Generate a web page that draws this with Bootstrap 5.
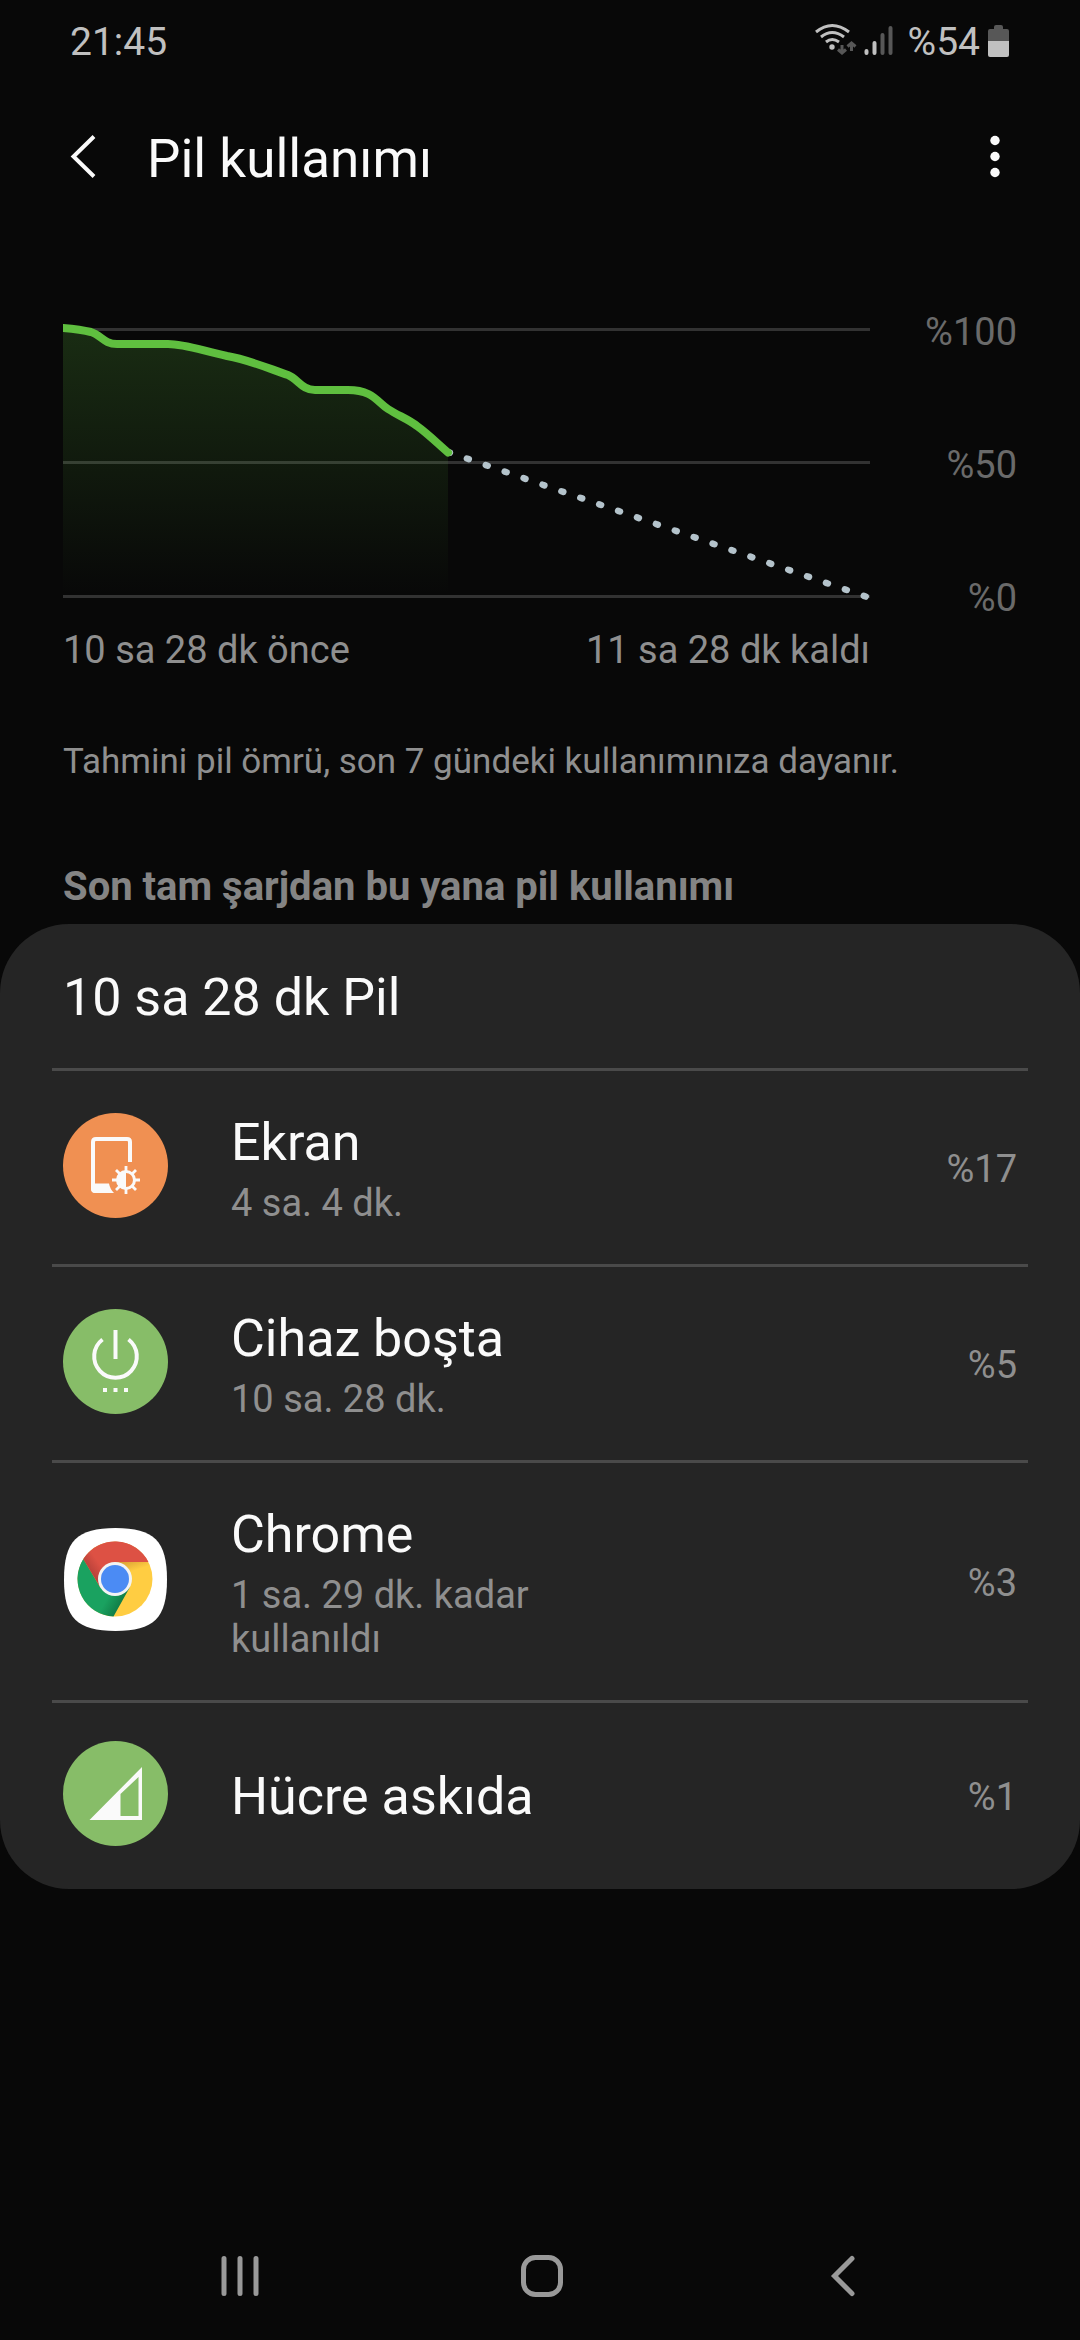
<!DOCTYPE html>
<html lang="tr">
<head>
<meta charset="utf-8">
<meta name="viewport" content="width=device-width, initial-scale=1">
<title>Pil kullanımı</title>
<link href="https://cdn.jsdelivr.net/npm/bootstrap@5.3.0/dist/css/bootstrap.min.css" rel="stylesheet">
<style>
  body { background: #080808; color: #fafafa; font-family: Roboto, "Noto Sans", sans-serif; font-size: 38px; line-height: 44px; }
  svg { display: block; flex-shrink: 0; }
  .status-bar { height: 84px; padding: 0 71px 0 70px; font-size: 39px; color: #c0c0c0; }
  .app-bar { height: 150px; padding: 0 63px 0 61px; }
  .app-bar h1 { font-size: 53px; line-height: 64px; font-weight: 400; margin: 0 0 0 38px; }
  .plain-btn { background: none; border: 0; padding: 0; color: inherit; }
  .side-pad { padding-left: 63px; padding-right: 63px; }
  .chart-block { margin-top: 76px; }
  .chart-plot { height: 310px; min-width: 0; }
  .axis { width: 147px; color: #6a6a6a; }
  .captions { margin: 8px 147px 0 0; }
  .dim { color: #8f8f8f; }
  .note { margin: 69px 0 0; font-size: 35px; line-height: 42px; }
  .section-title { margin: 82px 0 15px; font-size: 40px; line-height: 44px; font-weight: 700; color: #848484; }
  .panel { background: #252525; border-radius: 69px; }
  .panel h3 { font-size: 52px; line-height: 61px; font-weight: 400; margin: 0; padding: 43px 63px 40px; }
  .usage { --bs-list-group-bg: transparent; --bs-list-group-color: #fafafa; --bs-list-group-border-color: #4a4a4a; --bs-list-group-border-width: 0; margin: 0 52px; border-radius: 0; }
  .usage .list-group-item { padding: 41px 11px 39px; border-top: 3px solid #4a4a4a; }
  .usage .one-line { padding: 63px 11px 62px; }
  .usage svg { margin: -31px 63px -25px 0; }
  .usage .app-title { font-size: 52px; line-height: 61px; }
  .usage .app-time { margin-top: 8px; max-width: 340px; }
  .nav-keys { height: 128px; padding: 0 85px 0 89px; color: #999; }
</style>
<script src="https://cdn.jsdelivr.net/npm/bootstrap@5.3.0/dist/js/bootstrap.bundle.min.js"></script>
</head>
<body>
<div class="d-flex flex-column min-vh-100">
  <div class="status-bar d-flex align-items-center justify-content-between">
    <span>21:45</span>
    <div class="d-flex align-items-center">
      <svg width="82" height="44" viewBox="0 0 82 44" fill="none" aria-hidden="true">
        <g stroke="#c0c0c0" stroke-width="3">
          <path d="M2 12Q18 -1 35 12"/>
          <path d="M7 17Q18 8 30 17"/>
          <path d="M12 22Q18 17 25 22"/>
        </g>
        <circle cx="18" cy="27" r="2.7" fill="#c0c0c0"/>
        <path d="M28 25v7M24 29.500l4 3.500l4-3.500M37.500 31v-7M33.500 26.500l4-3.500l4 3.500" stroke="#575757" stroke-width="3"/>
        <g stroke-width="4" stroke-linecap="round"><path d="M52.500 31v2M60.500 23v10" stroke="#c0c0c0"/><path d="M68.500 15v18M76.500 8v25" stroke="#575757"/></g>
      </svg>
      <span class="ms-2 ps-1">%54</span>
      <svg class="ms-2" width="21" height="36" viewBox="0 0 21 36" aria-hidden="true">
        <path d="M6 5V3q0-2 2-2h5q2 0 2 2v2h4q2 0 2 2v11H0V7q0-2 2-2z" fill="#575757"/>
        <path d="M0 17h21v14q0 2-2 2H2q-2 0-2-2z" fill="#c0c0c0"/>
      </svg>
    </div>
  </div>

  <header class="app-bar d-flex align-items-center">
    <button class="plain-btn" type="button" aria-label="Geri">
      <svg width="48" height="48" viewBox="0 0 48 48" fill="none"><path d="M33 1.500L12.500 21.500L33 41.500" stroke="#fafafa" stroke-width="4"/></svg>
    </button>
    <h1>Pil kullanımı</h1>
    <button class="plain-btn ms-auto" type="button" aria-label="Diğer seçenekler">
      <svg width="44" height="48" viewBox="0 0 44 48" fill="#fafafa"><circle cx="22" cy="5.500" r="4.700"/><circle cx="22" cy="21.500" r="4.700"/><circle cx="22" cy="37.500" r="4.700"/></svg>
    </button>
  </header>

  <main class="flex-grow-1">
    <section class="side-pad">
      <div class="chart-block d-flex">
        <svg class="chart-plot flex-grow-1 flex-shrink-1" viewBox="0 0 807 310" preserveAspectRatio="none" fill="none" role="img" aria-label="Pil seviyesi grafiği">
          <defs>
            <linearGradient id="fade" x1="0" y1="18" x2="0" y2="285" gradientUnits="userSpaceOnUse">
              <stop offset="0" stop-color="#5fbf3f" stop-opacity=".2"/><stop offset="1" stop-color="#5fbf3f" stop-opacity="0"/>
            </linearGradient>
          </defs>
          <path d="M0 19.500H807M0 152.500H807M0 286.500H807" stroke="#323232" stroke-width="3"/>
          <path d="M0 18C12 19 20 20 28 22C38 25 41 34 54 34H105C122 34 140 41 164 46C187 50 207 59 225 65C235 69 239 80 252 80H285C310 80 314 92 325 99C336 106 345 109 354 116C364 123 374 133 385 142.500V285H0Z" fill="url(#fade)"/>
          <path d="M385 142L804 287" stroke="#b4c3cb" stroke-width="6.500" stroke-linecap="round" stroke-dasharray="2 18"/>
          <path d="M-4 18L0 18C12 19 20 20 28 22C38 25 41 34 54 34H105C122 34 140 41 164 46C187 50 207 59 225 65C235 69 239 80 252 80H285C310 80 314 92 325 99C336 106 345 109 354 116C364 123 374 133 385 142.500" stroke="#5fbf3f" stroke-width="8" stroke-linecap="round"/>
        </svg>
        <div class="axis d-flex flex-column justify-content-between text-end">
          <span>%100</span><span>%50</span><span>%0</span>
        </div>
      </div>
      <div class="captions dim d-flex justify-content-between"><span>10 sa 28 dk önce</span><span>11 sa 28 dk kaldı</span></div>
      <p class="note dim">Tahmini pil ömrü, son 7 gündeki kullanımınıza dayanır.</p>
      <h2 class="section-title">Son tam şarjdan bu yana pil kullanımı</h2>
    </section>

    <section class="panel">
      <h3>10 sa 28 dk Pil</h3>
      <div class="list-group usage">
        <a href="#" class="list-group-item d-flex align-items-center">
          <svg width="105" height="105" viewBox="0 0 105 105" fill="none" aria-hidden="true">
            <circle cx="52.500" cy="52.500" r="52.500" fill="#f09052"/>
            <path d="M67 49V29q0-3-3-3H33q-3 0-3 3V75q0 3 3 3h12" stroke="#fafafa" stroke-width="4"/>
            <path d="M28 70.500H46Q47 76 51 80H32q-4 0-4-4z" fill="#fafafa"/>
            <path d="M63 53v28M49 67h28M53 57l20 20M73 57l-20 20" stroke="#fafafa" stroke-width="2.800"/>
            <circle cx="63" cy="67" r="8.500" fill="#f09052" stroke="#fafafa" stroke-width="3"/>
            <path d="M63 58a9 9 0 0 0 0 18z" fill="#fafafa"/>
          </svg>
          <div><div class="app-title">Ekran</div><div class="app-time dim">4 sa. 4 dk.</div></div>
          <span class="ms-auto dim">%17</span>
        </a>
        <a href="#" class="list-group-item d-flex align-items-center">
          <svg width="105" height="105" viewBox="0 0 105 105" fill="none" aria-hidden="true">
            <circle cx="52.500" cy="52.500" r="52.500" fill="#87bd68"/>
            <path d="M39.500 30.500A21.300 21.300 0 1 0 65.500 30.500M52.500 21V50" stroke="#fafafa" stroke-width="4"/>
            <path d="M40 79h4v4h-4zM50.500 79h4v4h-4zM61 79h4v4h-4z" fill="#fafafa"/>
          </svg>
          <div><div class="app-title">Cihaz boşta</div><div class="app-time dim">10 sa. 28 dk.</div></div>
          <span class="ms-auto dim">%5</span>
        </a>
        <a href="#" class="list-group-item d-flex align-items-center">
          <svg width="105" height="105" viewBox="0 0 105 105" aria-hidden="true">
            <defs>
              <linearGradient id="redTone" x1="25" y1="42" x2="42" y2="30" gradientUnits="userSpaceOnUse"><stop offset="0" stop-color="#b8413a"/><stop offset=".6" stop-color="#dd5144"/></linearGradient>
              <linearGradient id="yellowTone" x1="60" y1="34" x2="64" y2="46" gradientUnits="userSpaceOnUse"><stop offset="0" stop-color="#d9a035"/><stop offset="1" stop-color="#ffcd42"/></linearGradient>
              <linearGradient id="greenTone" x1="60" y1="76" x2="46" y2="68" gradientUnits="userSpaceOnUse"><stop offset="0" stop-color="#107a45"/><stop offset="1" stop-color="#1aa260"/></linearGradient>
            </defs>
            <path d="M52.500 1C91 1 104 14 104 52.500S91 104 52.500 104S1 91 1 52.500S14 1 52.500 1Z" fill="#fff"/>
            <circle cx="52" cy="52" r="37.500" fill="url(#yellowTone)"/>
            <path d="M20.300 32L37.300 60.500L52 52L66.700 60.500L50.500 89.500A37.500 37.500 0 0 1 20.300 32Z" fill="url(#greenTone)"/>
            <path d="M20.300 32A37.500 37.500 0 0 1 85.500 35H52V52L37.300 60.500Z" fill="url(#redTone)"/>
            <circle cx="52" cy="52" r="17" fill="#f3f3f3"/><circle cx="52" cy="52" r="14" fill="#4b8bf4"/>
          </svg>
          <div><div class="app-title">Chrome</div><div class="app-time dim">1 sa. 29 dk. kadar kullanıldı</div></div>
          <span class="ms-auto dim">%3</span>
        </a>
        <a href="#" class="list-group-item one-line d-flex align-items-center">
          <svg width="105" height="105" viewBox="0 0 105 105" aria-hidden="true">
            <circle cx="52.500" cy="52.500" r="52.500" fill="#87bd68"/>
            <path d="M26.500 79H79V26ZM57.500 75V53L75.500 36V75Z" fill="#fafafa" fill-rule="evenodd"/>
          </svg>
          <div class="app-title">Hücre askıda</div>
          <span class="ms-auto dim">%1</span>
        </a>
      </div>
    </section>
  </main>

  <nav class="nav-keys d-flex align-items-center" aria-label="Gezinme tuşları">
    <button class="plain-btn flex-fill d-flex justify-content-center" type="button" aria-label="Son uygulamalar">
      <svg width="44" height="44" viewBox="0 0 44 44" stroke="currentColor" stroke-width="5" stroke-linecap="round"><path d="M6 4.500V39.500M22 4.500V39.500M38 4.500V39.500"/></svg>
    </button>
    <button class="plain-btn flex-fill d-flex justify-content-center" type="button" aria-label="Ana ekran">
      <svg width="44" height="44" viewBox="0 0 44 44" fill="none" stroke="currentColor" stroke-width="5"><rect x="3.500" y="3.500" width="37" height="37" rx="12"/></svg>
    </button>
    <button class="plain-btn flex-fill d-flex justify-content-center" type="button" aria-label="Geri">
      <svg width="44" height="44" viewBox="0 0 44 44" fill="none" stroke="currentColor" stroke-width="5" stroke-linecap="round"><path d="M30 4.500L12.500 22L30 39.500"/></svg>
    </button>
  </nav>
</div>
</body>
</html>
